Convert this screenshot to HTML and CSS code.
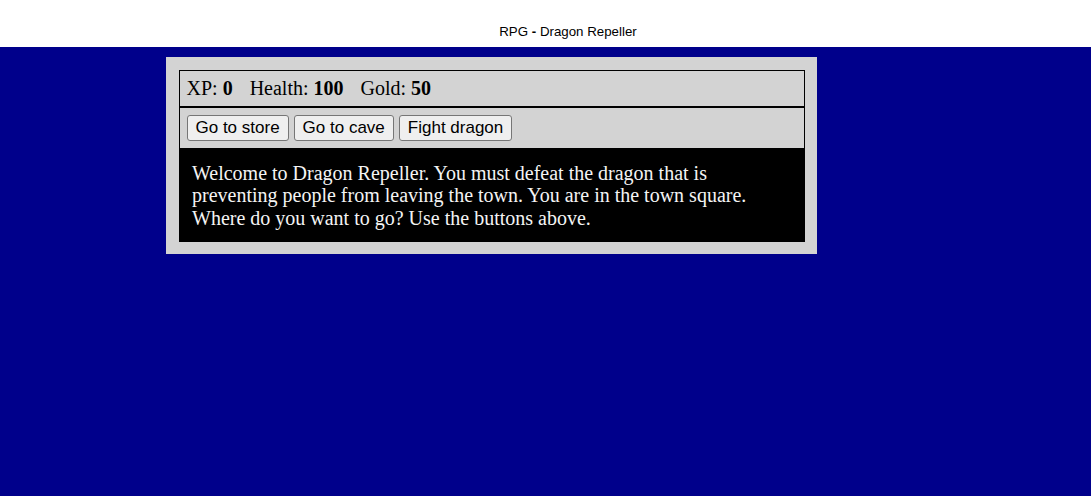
FILE: index.html
```html
<!DOCTYPE html>
<html lang="en">
<head>
<meta charset="utf-8">
<title>RPG - Dragon Repeller</title>
<link rel="stylesheet" href="styles.css">
</head>
<body>
<header class="topbar"><span class="title">RPG <b>-</b> Dragon Repeller</span></header>
<main class="stage">
  <div class="game">
    <div class="stats">
      <span class="stat">XP: <strong>0</strong></span>
      <span class="stat">Health: <strong>100</strong></span>
      <span class="stat">Gold: <strong>50</strong></span>
    </div>
    <div class="controls">
      <button class="btn">Go to store</button>
      <button class="btn">Go to cave</button>
      <button class="btn">Fight dragon</button>
    </div>
    <div class="text">Welcome to Dragon Repeller. You must defeat the dragon that is preventing people from leaving the town. You are in the town square. Where do you want to go? Use the buttons above.</div>
  </div>
</main>
</body>
</html>
```

FILE: styles.css
```css
html, body {
  margin: 0;
  padding: 0;
  height: 100%;
}
body {
  display: flex;
  flex-direction: column;
  background: #00008b;
  font-family: "Liberation Serif", "Times New Roman", serif;
}
.topbar {
  height: 47px;
  flex: none;
  background: #ffffff;
  display: flex;
  align-items: center;
  justify-content: center;
  padding: 16px 0 0 45px;
  box-sizing: border-box;
  font-family: "Liberation Sans", Arial, sans-serif;
  font-size: 13.3px;
  color: #000;
}
.stage {
  flex: 1;
  padding: 10px 0 0 166px;
}
.game {
  width: 626px;
  padding: 13px 12px 12px 13px;
  background: #d3d3d3;
}
.stats, .controls {
  border: 1px solid #000;
  padding: 6.5px;
  color: #000;
  font-size: 20px;
}
.stats {
  display: flex;
  height: 22px;
  align-items: center;
}
.stat {
  padding-right: 17px;
  white-space: pre;
}
.controls {
  display: flex;
  gap: 5px;
  height: 27px;
  align-items: center;
}
.btn {
  font-family: "Liberation Sans", Arial, sans-serif;
  font-size: 17px;
  height: 26px;
  padding: 0 8px;
  border: 1px solid #767676;
  border-radius: 3px;
  background: #efefef;
  color: #000;
}
.text {
  background: #000;
  color: #f4f4f4;
  padding: 13px;
  font-size: 20px;
  line-height: 22.3px;
}
```
